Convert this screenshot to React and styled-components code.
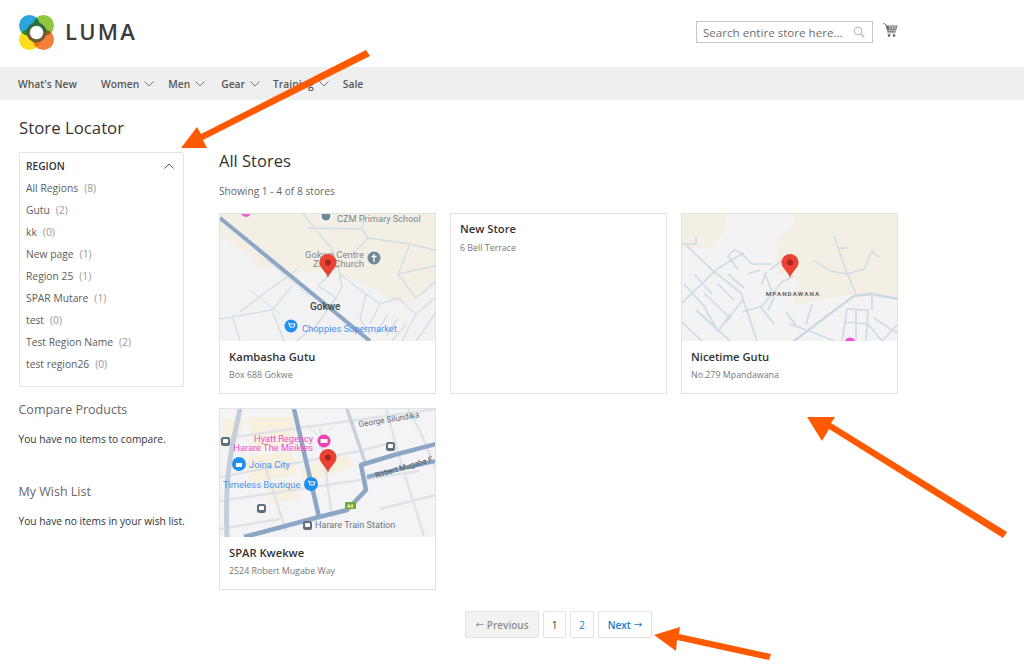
import React from "react";
import styled, { createGlobalStyle } from "styled-components";

const Global = createGlobalStyle`
  html, body { margin: 0; padding: 0; background: #fff; }
  body { font-family: "Open Sans", "Liberation Sans", sans-serif; color: #333; }
  * { box-sizing: border-box; }
`;

const Page = styled.div`
  position: relative;
  width: 1024px;
  height: 664px;
  overflow: hidden;
  background: #fff;
`;
const Header = styled.header`
  height: 67px;
  display: flex;
  align-items: flex-start;
  padding: 15px 126px 0 19px;
`;
const Brand = styled.div`
  display: flex;
  align-items: center;
  gap: 11px;
  height: 35px;
`;
const BrandName = styled.span`
  font-family: "Open Sans", sans-serif;
  font-size: 22px;
  font-weight: 600;
  letter-spacing: 2.2px;
  line-height: 1;
  color: #3d3d3d;
  margin-bottom: 4px;
`;
const HeaderRight = styled.div`
  margin-left: auto;
  display: flex;
  align-items: flex-start;
  gap: 10px;
  padding-top: 6px;
`;
const SearchBox = styled.div`
  width: 177px;
  height: 22px;
  border: 1px solid #c6c6c6;
  display: flex;
  align-items: center;
  justify-content: space-between;
  padding: 0 7px 0 6px;
  font-size: 11.6px;
  color: #6f6f6f;
`;
const CartSlot = styled.div`
  margin-top: 2px;
  line-height: 0;
`;
const Nav = styled.nav`
  height: 33px;
  background: #efefef;
  display: flex;
  align-items: center;
  padding-left: 18px;
  font-size: 10.3px;
  font-weight: 600;
  color: #575757;
`;
const NavItem = styled.span`
  display: inline-flex;
  align-items: center;
  gap: 5px;
  margin-right: ${(p) => p.$gap}px;
`;
const Body = styled.div`
  display: flex;
  padding-left: 19px;
`;
const Aside = styled.aside`
  width: 165px;
  padding-top: 17px;
`;
const PageTitle = styled.h1`
  margin: 0 0 13px;
  font-size: 16.8px;
  line-height: 22px;
  font-weight: 400;
  color: #333;
`;
const FilterBox = styled.div`
  width: 165px;
  height: 235px;
  border: 1px solid #e4e4e4;
  border-radius: 2px;
  padding: 2px 9px 0 6px;
`;
const FilterHead = styled.div`
  display: flex;
  justify-content: space-between;
  align-items: center;
  height: 22px;
  font-size: 10.2px;
  font-weight: 600;
  color: #333;
`;
const FilterRow = styled.div`
  height: 22px;
  display: flex;
  align-items: center;
  gap: 6px;
  font-size: 10.3px;
  color: #5d5d5d;
`;
const Count = styled.span`
  color: #999;
`;
const SideTitle = styled.h2`
  margin: 0 0 0 -0.5px;
  font-size: 12.5px;
  line-height: 16px;
  font-weight: 400;
  color: #666;
  padding-top: ${(p) => p.$top}px;
`;
const SideText = styled.p`
  margin: 14px 0 0 -0.5px;
  font-size: 10.2px;
  line-height: 15px;
  color: #333;
  white-space: nowrap;
`;
const Main = styled.main`
  margin-left: 35px;
  padding-top: 50px;
  width: 700px;
`;
const SectionTitle = styled.h2`
  margin: 0;
  font-size: 16.5px;
  line-height: 22px;
  font-weight: 400;
  color: #333;
`;
const Showing = styled.div`
  margin-top: 12px;
  font-size: 10.2px;
  line-height: 14px;
  color: #666;
`;
const Cards = styled.div`
  margin-top: 15px;
  display: grid;
  grid-template-columns: repeat(3, 217px);
  grid-auto-rows: 181px;
  column-gap: 14px;
  row-gap: 14px;
`;
const Card = styled.article`
  border: 1px solid #e2e2e2;
  display: flex;
  flex-direction: column;
  background: #fff;
  height: ${(p) => p.$h || 181}px;
`;
const MapFrame = styled.div`
  height: ${(p) => p.$h || 127}px;
  line-height: 0;
  overflow: hidden;
`;
const CardBody = styled.div`
  padding: ${(p) => (p.$plain ? "7px" : "8px")} 9px 0;
`;
const StoreName = styled.div`
  font-size: 11.2px;
  line-height: 16px;
  font-weight: 600;
  color: #333;
`;
const StoreAddress = styled.div`
  margin-top: ${(p) => (p.$plain ? 5 : 4)}px;
  font-size: 8.85px;
  line-height: 13px;
  color: #777;
`;
const Pager = styled.div`
  margin-top: 22px;
  display: flex;
  gap: 4px;
  padding-left: 246px;
`;
const PageBtn = styled.span`
  height: 27px;
  width: ${(p) => p.$w}px;
  border: 1px solid #e2e2e2;
  border-radius: 2px;
  display: flex;
  align-items: center;
  justify-content: center;
  gap: 3px;
  font-size: 10px;
  font-weight: ${(p) => (p.$bold ? 600 : 400)};
  color: ${(p) => p.$color || "#333"};
  background: ${(p) => p.$bg || "#fff"};
`;
const ArrowGlyph = styled.span`
  font-family: "DejaVu Sans", sans-serif;
  font-size: 10px;
  font-weight: 400;
  line-height: 1;
`;
const Overlay = styled.svg`
  position: absolute;
  inset: 0;
  pointer-events: none;
`;
const LogoSvg = styled.svg`
  isolation: isolate;
`;
const Petal = styled.circle`
  mix-blend-mode: multiply;
`;

const Chevron = ({ up, size = 10, color = "#666" }) => (
  <svg width={size} height={size * 0.6} viewBox="0 0 10 6">
    <path d={up ? "M.5 5.500 5 1l4.500 4.500" : "M.5.5 5 5 9.500.5"} fill="none" stroke={color} strokeWidth=".9" />
  </svg>
);

const Logo = () => (
  <LogoSvg width="35" height="35" viewBox="0 0 35 35">
    <Petal cx="10.5" cy="10.5" r="10.5" fill="#2aa5e0" />
    <Petal cx="24.5" cy="10.5" r="10.5" fill="#8fc740" />
    <Petal cx="10.5" cy="24.5" r="10.5" fill="#fbdc1e" />
    <Petal cx="24.5" cy="24.5" r="10.5" fill="#f67f3c" />
    <circle cx="17.500" cy="17.500" r="10" fill="#6f5a34" />
    <path d="M7.500 17.500a10 10 0 0 1 20 0Z" fill="#2e6a46" />
    <circle cx="17.500" cy="17.500" r="6.800" fill="#fff" />
  </LogoSvg>
);

const SearchIcon = () => (
  <svg width="12" height="12" viewBox="0 0 12 12" fill="none" stroke="#b5b5b5" strokeWidth="1">
    <circle cx="5" cy="5" r="3.800" />
    <path d="M8 8l3.300 3.300" strokeWidth="1.300" />
  </svg>
);

const CartIcon = () => (
  <svg width="15" height="15" viewBox="0 0 16 16">
    <path d="M.3.4 3 1.600l2.200 7.600h8.200" fill="none" stroke="#666" strokeWidth="1" />
    <path d="M3.200 2.600h12.400l-1.600 5.400H5z" fill="#6b6b6b" />
    <path d="M6 4h9M6.300 5.600h8.300M7 2.800l.5 5M10 2.800v5M13 2.800l-.5 5" stroke="#fff" strokeWidth=".45" fill="none" />
    <path d="M4.500 10.500h9" stroke="#777" strokeWidth=".8" />
    <circle cx="6.400" cy="13.400" r="1.300" fill="#555" />
    <circle cx="11.800" cy="13.400" r="1.300" fill="#555" />
  </svg>
);

const Pin = () => (
  <g>
    <path d="M108 64C106.500 58 99.500 54 99.500 48.500 99.500 43.800 103.300 40 108 40S116.500 43.800 116.500 48.500C116.500 54 109.500 58 108 64Z" fill="#ea4335" />
    <circle cx="108" cy="48.500" r="3" fill="#a8271f" />
  </g>
);

const Roads = ({ d, w = 1.4, c = "#d3dde6" }) => (
  <path d={d} fill="none" stroke={c} strokeWidth={w} strokeLinejoin="round" />
);

const mapFont = { fontFamily: "Roboto, sans-serif" };
const Label = ({ x, y, size = 9.200, fill = "#7d8790", weight = 400, anchor, spacing, rotate, children }) => (
  <text
    x={x}
    y={y}
    fontSize={size}
    fill={fill}
    fontWeight={weight}
    textAnchor={anchor}
    letterSpacing={spacing}
    transform={rotate ? `rotate(${rotate} ${x} ${y})` : undefined}
    style={mapFont}
  >
    {children}
  </text>
);

const Transit = ({ x, y }) => (
  <g>
    <rect x={x} y={y} width="9" height="9" rx="2.500" fill="#5e6e7c" />
    <rect x={x + 2} y={y + 2} width="5" height="4" rx=".8" fill="#fff" />
  </g>
);

const GokweMap = () => (
  <svg width="215" height="127" viewBox="0 0 215 127">
    <rect width="215" height="127" fill="#f2f2f3" />
    <path d="M0 22 26 38 40 55 62 53 76 60 96 57 124 60 140 67 160 78 177 89 197 88 216 70V0H0Z" fill="#f4efe4" />
    <Roads d="M83 0 112 35 118 52 122 72 116 84 96 112 76 127M118 52 108 62 98 72 116 84M20 98 50 75 78 55M0 105 52 96 64 127M52 96 72 72M12 101 20 127M88 14 142 15 148 24 190 30 215 36M142 15 145 0M148 24 135 38M190 30 178 60 196 84 215 68M178 60 215 52M120 60 146 80 160 90 178 84 196 100 215 84M146 80 140 105 150 120M160 90 150 110M168 100 156 120M178 104 166 122M186 110 172 127M196 100 182 127M215 100 196 127" />
    <Roads d="M0 4 150 127" w={4} c="#8ca7c5" />
    <Roads d="M46 45 90 83M30 76 60 100" w={1} />
    <circle cx="106" cy="2" r="6" fill="#fff" />
    <circle cx="106" cy="2" r="4.500" fill="#6b8a96" />
    <circle cx="154" cy="44" r="6.500" fill="#6e8a96" />
    <path d="M154 40v8M151.500 42.500h5" stroke="#fff" strokeWidth="1.300" />
    <circle cx="26" cy="-2" r="5" fill="#ef5fc8" />
    <Label x={117} y={8}>CZM Primary School</Label>
    <Label x={85} y={44} size={9.500}>Gokwe Centre</Label>
    <Label x={93} y={53} size={9.500}>Zion Church</Label>
    <Pin />
    <Label x={90} y={96} size={10} fill="#444" weight={500}>Gokwe</Label>
    <circle cx="71" cy="112" r="6.500" fill="#1e90f0" />
    <path d="M68 109h1l1 4h4l1-3h-5" stroke="#fff" fill="none" strokeWidth="1" />
    <Label x={82} y={118} size={9.400} fill="#4a90ee">Choppies Supermarket</Label>
  </svg>
);

const MpandawanaMap = () => (
  <svg width="215" height="127" viewBox="0 0 215 127">
    <rect width="215" height="127" fill="#f3f3f4" />
    <path d="M0 0H44V14L30 34H0ZM110 0 112 10 96 24 93 60 118 66 110 92 140 85 176 80 216 85V0Z" fill="#f4efe4" />
    <Roads d="M0 30 14 30 14 22M5 32 29 55 59 79 75 127M0 89 35 55 60 40 70 50 90 50M22 79 49 105M2 70 22 92 36 118M12 60 30 80M36 70 52 86M46 60 62 74M0 108 20 127M14 96 48 127M48 100 36 118M62 84 44 108M60 98 80 92 100 68 112 62M78 92 92 110M84 62 92 84 86 96M88 56 98 48 106 46M62 40 52 36 46 42 56 56M80 70 84 58M66 60 78 56" w={1.700} c="#cfdbe5" />
    <Roads d="M112 127 145 102 172 82 189 80 216 85" w={2.400} c="#ccd8e2" />
    <Roads d="M165 95 160 127M165 95 186 96 184 127M163 108 186 110M174 96 174 126M186 110 200 127M190 80 190 96M192 104 216 120M200 127 216 110M108 110 130 118 152 127M104 98 116 114M124 110 130 90" w={1.700} c="#cfdbe5" />
    <Roads d="M152 22 165 59 174 80M132 47 149 57 165 60 182 55 190 37 198 44M156 34 168 34" w={1.400} c="#cfdbe5" />
    <Label x={111} y={82} size={6.200} fill="#666" weight={700} anchor="middle" spacing={1.100}>MPANDAWANA</Label>
    <Pin />
    <circle cx="168" cy="129" r="5.500" fill="#f04fd0" />
  </svg>
);

const HarareMap = () => (
  <svg width="215" height="128" viewBox="0 0 215 128">
    <rect width="215" height="128" fill="#f4f3f5" />
    <path d="M4 10H24L16 38H0ZM28 8H72L76 34 34 42ZM22 48 72 42 78 66 30 74ZM80 60 128 46 132 58 84 76ZM46 76 76 72 80 90 50 94Z" fill="#f8f0de" />
    <Roads d="M0 30 216 0M0 68 140 42 170 34M0 92 200 62M46 60 66 122M100 20 112 108M166 0 180 50 204 127M188 0 200 22 216 60M0 120 60 110M160 100 216 86" w={2.500} c="#dfe3e8" />
    <Roads d="M20 0C14 30 4 60 7 128" w={5} c="#c3cfdc" />
    <Roads d="M127 0 146 56" w={3.500} c="#c6d1dc" />
    <Roads d="M74 0 99 108" w={4.500} c="#8ca7c5" />
    <Roads d="M24 128 99 108 127 101 146 81 141 56 174 46 216 35" w={4.500} c="#8ca7c5" />
    <Roads d="M147 68 162 64 216 52" w={4} c="#8ca7c5" />
    <Roads d="M88 16 100 30 112 18M100 30 100 40" w={.7} c="#bfe3cc" />
    <Transit x={1} y={28} />
    <Transit x={166} y={33} />
    <Transit x={37} y={95} />
    <circle cx="104" cy="32" r="6.500" fill="#ee3fb5" />
    <rect x="100.500" y="30" width="7" height="4" fill="#fff" />
    <Label x={93} y={33} size={9.200} fill="#ef50c6" anchor="end">Hyatt Regency</Label>
    <Label x={93} y={42} size={9.300} fill="#ef50c6" anchor="end">Harare The Meikles</Label>
    <Label x={139} y={18} size={8.200} fill="#64707c" rotate={-9}>George Silundika</Label>
    <Label x={156} y={69} size={7.800} fill="#4c5661" rotate={-16}>Robert Mugabe F</Label>
    <circle cx="19" cy="55" r="7" fill="#1e90f0" />
    <rect x="16" y="54" width="6" height="4" fill="#fff" />
    <Label x={29} y={59} size={9.300} fill="#4a90ee">Joina City</Label>
    <Label x={3} y={79} size={9.400} fill="#4a90ee">Timeless Boutique</Label>
    <circle cx="91" cy="75" r="7" fill="#1e90f0" />
    <path d="M88 72h1l1 4h4l1-3h-5" stroke="#fff" fill="none" strokeWidth="1" />
    <rect x="125" y="93" width="11" height="7" rx="1" fill="#6fa83a" />
    <Label x={127} y={99} size={5} fill="#fff8b0" weight={700}>A4</Label>
    <Transit x={83} y={112} />
    <Label x={95} y={119} size={9.100} fill="#6e7780">Harare Train Station</Label>
    <Pin />
  </svg>
);

const regions = [
  ["All Regions", 8],
  ["Gutu", 2],
  ["kk", 0],
  ["New page", 1],
  ["Region 25", 1],
  ["SPAR Mutare", 1],
  ["test", 0],
  ["Test Region Name", 2],
  ["test region26", 0],
];

const nav = [
  ["What's New", 24, false],
  ["Women", 14, true],
  ["Men", 16, true],
  ["Gear", 13, true],
  ["Training", 14, true],
  ["Sale", 0, false],
];

export default function App() {
  return (
    <Page>
      <Global />
      <Header>
        <Brand>
          <Logo />
          <BrandName>LUMA</BrandName>
        </Brand>
        <HeaderRight>
          <SearchBox>
            <span>Search entire store here...</span>
            <SearchIcon />
          </SearchBox>
          <CartSlot>
            <CartIcon />
          </CartSlot>
        </HeaderRight>
      </Header>
      <Nav>
        {nav.map(([label, gap, chev]) => (
          <NavItem key={label} $gap={gap}>
            {label}
            {chev && <Chevron />}
          </NavItem>
        ))}
      </Nav>
      <Body>
        <Aside>
          <PageTitle>Store Locator</PageTitle>
          <FilterBox>
            <FilterHead>
              REGION
              <Chevron up size={10} color="#444" />
            </FilterHead>
            {regions.map(([name, n]) => (
              <FilterRow key={name}>
                <span>{name}</span>
                <Count>({n})</Count>
              </FilterRow>
            ))}
          </FilterBox>
          <SideTitle $top={15}>Compare Products</SideTitle>
          <SideText>You have no items to compare.</SideText>
          <SideTitle $top={37}>My Wish List</SideTitle>
          <SideText>You have no items in your wish list.</SideText>
        </Aside>
        <Main>
          <SectionTitle>All Stores</SectionTitle>
          <Showing>Showing 1 - 4 of 8 stores</Showing>
          <Cards>
            <Card>
              <MapFrame><GokweMap /></MapFrame>
              <CardBody>
                <StoreName>Kambasha Gutu</StoreName>
                <StoreAddress>Box 688 Gokwe</StoreAddress>
              </CardBody>
            </Card>
            <Card>
              <CardBody $plain>
                <StoreName>New Store</StoreName>
                <StoreAddress $plain>6 Bell Terrace</StoreAddress>
              </CardBody>
            </Card>
            <Card>
              <MapFrame><MpandawanaMap /></MapFrame>
              <CardBody>
                <StoreName>Nicetime Gutu</StoreName>
                <StoreAddress>No.279 Mpandawana</StoreAddress>
              </CardBody>
            </Card>
            <Card $h={182}>
              <MapFrame $h={128}><HarareMap /></MapFrame>
              <CardBody>
                <StoreName>SPAR Kwekwe</StoreName>
                <StoreAddress>2524 Robert Mugabe Way</StoreAddress>
              </CardBody>
            </Card>
          </Cards>
          <Pager>
            <PageBtn $w={74} $bold $color="#8f8f8f" $bg="#f2f2f2"><ArrowGlyph>←</ArrowGlyph>Previous</PageBtn>
            <PageBtn $w={23}>1</PageBtn>
            <PageBtn $w={24} $color="#1979c3">2</PageBtn>
            <PageBtn $w={54} $bold $color="#1979c3">Next<ArrowGlyph>→</ArrowGlyph></PageBtn>
          </Pager>
        </Main>
      </Body>
      <Overlay width="1024" height="664" viewBox="0 0 1024 664">
        <polygon points="366,50 370,56 203,140 207,148 181,148 197,127 201,134" fill="#ff5a00" />
        <polygon points="1007,532 1003,538 829,429 822,441 807,417 835,417 831,423" fill="#ff5a00" />
        <polygon points="771,654 769,660 677,640 676,651 654,635 680,627 679,634" fill="#ff5a00" />
      </Overlay>
    </Page>
  );
}
